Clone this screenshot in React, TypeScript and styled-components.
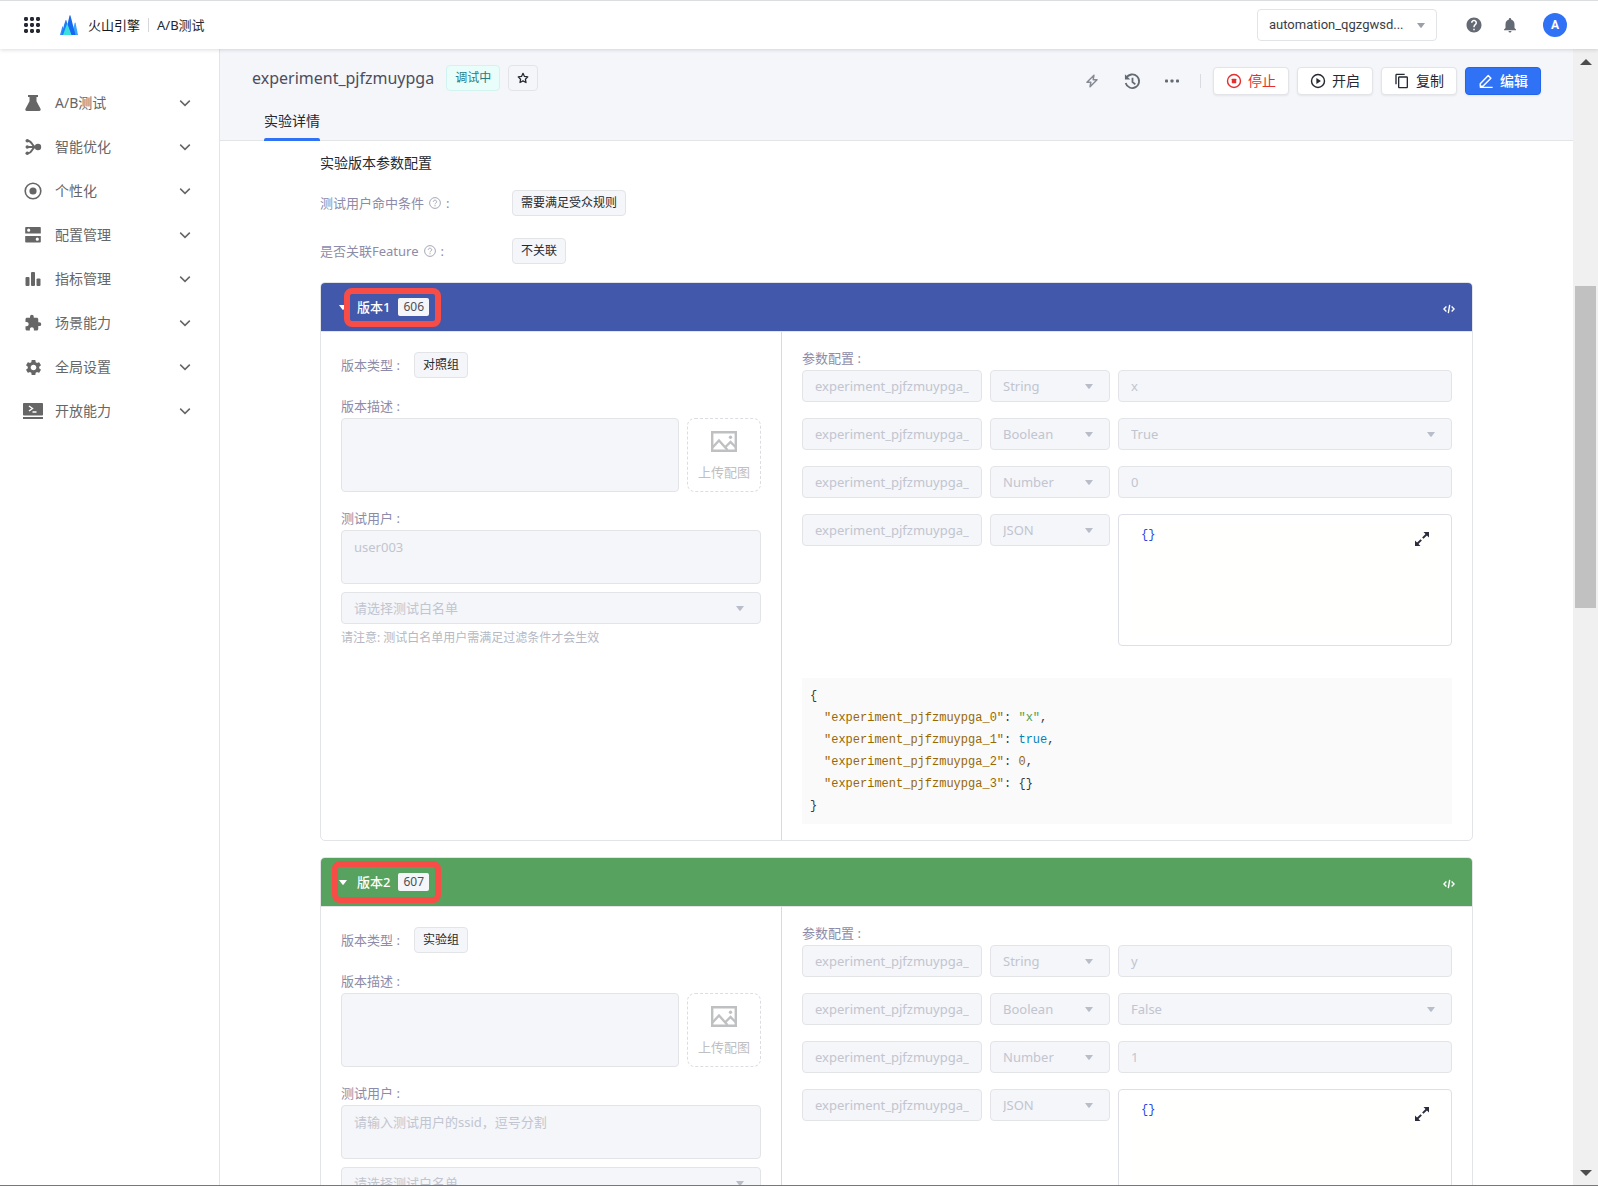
import React, { useId } from 'react';
import styled, { createGlobalStyle } from 'styled-components';
import { MdContentCopy, MdExtension, MdHelp, MdNotifications, MdSettings } from 'react-icons/md';

const color = {
  text: '#252931',
  muted: '#8d8ba9',
  disabled: '#c1c5d0',
  line: '#e3e4e8',
  field: '#f5f6f9',
  blue: '#2f72f5',
  red: '#e52e2e',
  mark: '#f84c47',
};

const sans = '"Noto Sans", "Noto Sans CJK SC", sans-serif';
const mono = '"Liberation Mono", "Noto Sans CJK SC", monospace';

const GlobalStyle = createGlobalStyle`
  * { box-sizing: border-box; }
  body { margin: 0; background: #fff; color: ${color.text}; font: 13px/20px ${sans}; }
  button, input, select, textarea { font: inherit; color: inherit; margin: 0; }
  svg { display: block; flex: none; }
`;

const Shell = styled.div`
  display: flex;
  flex-direction: column;
  height: 100vh;
  border-top: 1px solid #dcdddf;
  border-bottom: 1px solid #77787a;
  overflow: hidden;
`;

/* ---------- top bar ---------- */

const TopBar = styled.header`
  display: flex;
  align-items: center;
  flex: none;
  height: 48px;
  padding: 0 31px 0 24px;
  background: #fff;
  box-shadow: 0 1px 4px rgba(30, 35, 60, 0.16);
  z-index: 2;
`;

const IconButton = styled.button`
  display: flex;
  align-items: center;
  justify-content: center;
  padding: 0;
  border: 0;
  background: none;
  color: #646a73;
`;

const Brand = styled.a`
  display: flex;
  align-items: center;
  gap: 10px;
  margin-left: 20px;
  color: #16181d;
  text-decoration: none;
`;

const Product = styled.span`
  margin-left: 8px;
  padding-left: 8px;
  border-left: 1px solid #d5d7dc;
  line-height: 14px;
`;

const TopRight = styled.div`
  display: flex;
  align-items: center;
  margin-left: auto;
`;

const HelpGroup = styled.div`
  display: flex;
  gap: 18px;
  margin: 0 24px 0 28px;
`;

const Avatar = styled.button`
  width: 24px;
  height: 24px;
  padding: 0;
  border: 0;
  border-radius: 50%;
  background: ${color.blue};
  color: #fff;
  font: 700 12px/24px Roboto, "Noto Sans CJK SC", sans-serif;
`;

/* ---------- form controls ---------- */

const SelectBox = styled.div<{ $tone?: 'light' }>`
  display: grid;
  align-items: center;
  min-width: 0;
  > * { grid-area: 1 / 1; }
  > svg {
    justify-self: end;
    margin-right: ${(p) => (p.$tone ? 12 : 17)}px;
    color: ${(p) => (p.$tone ? '#9a9fa8' : '#b8bdc9')};
    pointer-events: none;
  }
`;

const SelectControl = styled.select<{ $tone?: 'light' }>`
  appearance: none;
  width: 100%;
  height: 32px;
  padding: 0 30px 0 ${(p) => (p.$tone ? 11 : 12)}px;
  border: 1px solid ${color.line};
  border-radius: 4px;
  background: ${(p) => (p.$tone ? '#fff' : color.field)};
  color: ${(p) => (p.$tone ? '#3a3d44' : color.disabled)};
  font-family: ${(p) => (p.$tone ? 'Roboto, "Noto Sans CJK SC", sans-serif' : 'inherit')};
  opacity: 1;
`;

const ProjectPicker = styled.div`
  width: 180px;
`;

const TextInput = styled.input`
  width: 100%;
  min-width: 0;
  height: 32px;
  padding: 0 12px;
  border: 1px solid ${color.line};
  border-radius: 4px;
  background: ${color.field};
  color: ${color.disabled};
`;

const TextArea = styled.textarea<{ $height: number }>`
  display: block;
  flex: 1;
  width: 100%;
  min-width: 0;
  height: ${(p) => p.$height}px;
  padding: 6px 12px;
  border: 1px solid ${color.line};
  border-radius: 4px;
  background: ${color.field};
  color: ${color.disabled};
  resize: none;
  &::placeholder { color: ${color.disabled}; opacity: 1; }
`;

/* ---------- side menu ---------- */

const Columns = styled.div`
  display: flex;
  flex: 1;
  min-height: 0;
`;

const SideNav = styled.nav`
  flex: none;
  width: 220px;
  padding-top: 32px;
  border-right: 1px solid ${color.line};
`;

const NavItem = styled.button`
  display: flex;
  align-items: center;
  width: 100%;
  height: 44px;
  padding: 0 28px 0 23px;
  border: 0;
  background: none;
  color: #666;
  font-size: 14px;
  text-align: left;
`;

const NavIcon = styled.span`
  display: flex;
  justify-content: center;
  width: 20px;
`;

const NavLabel = styled.span`
  flex: 1;
  margin-left: 12px;
`;

/* ---------- page header ---------- */

const Main = styled.main`
  display: flex;
  flex-direction: column;
  flex: 1;
  min-width: 0;
`;

const PageHead = styled.div`
  flex: none;
  padding: 16px 32px 0;
  background: ${color.field};
  border-bottom: 1px solid ${color.line};
`;

const HeadRow = styled.div`
  display: flex;
  align-items: flex-start;
  height: 36px;
`;

const PageTitle = styled.h1`
  margin: 0 12px 0 0;
  color: #4c4d5e;
  font-size: 16px;
  font-weight: 400;
  line-height: 26px;
`;

const Tag = styled.span<{ $active?: boolean }>`
  padding: 0 8px;
  border: 1px solid ${(p) => (p.$active ? '#d3f3f1' : color.line)};
  border-radius: 4px;
  background: ${(p) => (p.$active ? '#e9fdfb' : color.field)};
  color: ${(p) => (p.$active ? '#267b85' : color.text)};
  font-size: 12px;
  line-height: 24px;
`;

const StarButton = styled(IconButton)`
  width: 30px;
  height: 26px;
  margin-left: 8px;
  border: 1px solid ${color.line};
  border-radius: 4px;
  color: ${color.text};
`;

const Actions = styled.div`
  display: flex;
  align-items: center;
  gap: 8px;
  margin-left: auto;
  padding-top: 2px;
`;

const ToolGroup = styled.div`
  display: flex;
  gap: 16px;
  margin-right: 8px;
  > button { width: 24px; height: 24px; }
`;

const Divider = styled.span`
  width: 1px;
  height: 14px;
  margin-right: 4px;
  background: #d9dbe0;
`;

const ActionButton = styled.button<{ $kind?: 'danger' | 'primary' }>`
  display: flex;
  align-items: center;
  gap: 6px;
  height: 28px;
  padding: 0 12px;
  border: 1px solid ${(p) => (p.$kind === 'primary' ? '#2466ea' : color.line)};
  border-radius: 4px;
  background: ${(p) => (p.$kind === 'primary' ? color.blue : '#fff')};
  color: ${(p) => (p.$kind === 'primary' ? '#fff' : p.$kind === 'danger' ? color.red : color.text)};
  font-size: 14px;
  font-weight: ${(p) => (p.$kind === 'primary' ? 500 : 400)};
  box-shadow: 0 1px 2px rgba(30, 35, 60, 0.08);
`;

const Tabs = styled.div`
  display: flex;
  padding-left: 12px;
`;

const Tab = styled.button`
  margin-bottom: -1px;
  padding: 3px 0 0;
  border: 0;
  background: none;
  font-size: 14px;
  line-height: 34px;
  &::after {
    content: '';
    display: block;
    height: 3px;
    border-radius: 2px 2px 0 0;
    background: ${color.blue};
  }
`;

/* ---------- page body ---------- */

const Content = styled.div`
  flex: 1;
  min-height: 0;
  padding: 10px 100px 0;
  overflow: hidden;
`;

const SectionTitle = styled.h2`
  margin: 0 0 4px;
  font-size: 14px;
  font-weight: 400;
  line-height: 24px;
`;

const InfoRow = styled.div`
  display: flex;
  align-items: center;
  height: 48px;
`;

const InfoLabel = styled.span`
  display: flex;
  align-items: center;
  gap: 5px;
  width: 192px;
  color: ${color.muted};
`;

const CardList = styled.div`
  display: grid;
  gap: 16px;
  padding: 7px 0 16px;
`;

const Card = styled.section`
  position: relative;
  border: 1px solid ${color.line};
  border-radius: 5px;
  overflow: hidden;
`;

const CardHead = styled.div<{ $fill: string }>`
  display: flex;
  align-items: center;
  height: 49px;
  padding: 0 17px 0 18px;
  border-bottom: 1px solid ${color.line};
  background: ${(p) => p.$fill};
  background-clip: padding-box;
  color: #fff;
`;

const CardToggle = styled.button`
  display: flex;
  align-items: center;
  gap: 10px;
  padding: 0;
  border: 0;
  background: none;
  font-weight: 500;
`;

const VersionId = styled.span`
  margin: 0 auto 0 8px;
  padding: 0 5px;
  border-radius: 2px;
  background: ${color.field};
  color: #4c4f58;
  font-size: 12px;
  line-height: 18px;
`;

const CodeButton = styled(IconButton)`
  padding-top: 3px;
  color: #fff;
`;

/* Highlight frame drawn over the card header */
const Highlight = styled.div<{ $wide?: boolean }>`
  position: absolute;
  top: ${(p) => (p.$wide ? 3 : 5)}px;
  left: ${(p) => (p.$wide ? 11 : 23)}px;
  width: ${(p) => (p.$wide ? 109 : 97)}px;
  height: ${(p) => (p.$wide ? 42 : 39)}px;
  border: 6px solid ${color.mark};
  border-radius: 8px;
  pointer-events: none;
`;

const CardBody = styled.div`
  display: flex;
`;

const LeftPane = styled.div`
  flex: none;
  width: 461px;
  padding: 20px;
  border-right: 1px solid #d9dae0;
`;

const RightPane = styled.div`
  flex: 1;
  min-width: 0;
  padding: 14px 20px 16px;
`;

const TypeRow = styled.div`
  display: flex;
  align-items: center;
  gap: 14px;
  height: 26px;
  margin-bottom: 16px;
  color: ${color.muted};
`;

const FieldLabel = styled.label`
  display: block;
  color: ${color.muted};
  line-height: 24px;
`;

const FieldGroup = styled.div`
  display: flex;
  gap: 8px;
  margin-bottom: 14px;
`;

const FieldStack = styled.div`
  display: grid;
  gap: 8px;
`;

const Note = styled.p`
  margin: 0;
  padding-top: 2px;
  color: #b4b8c4;
  font-size: 12px;
  line-height: 24px;
`;

const UploadButton = styled.button`
  display: flex;
  flex-direction: column;
  align-items: center;
  justify-content: space-between;
  width: 74px;
  height: 74px;
  padding: 12px 0 9px;
  border: 1px dashed #dcdde2;
  border-radius: 8px;
  background: #fff;
  color: #bfc0c2;
`;

const ParamRow = styled.div`
  display: grid;
  grid-template-columns: 180px 120px minmax(0, 1fr);
  align-items: start;
  gap: 8px;
  margin-bottom: 16px;
`;

const JsonEditor = styled.div`
  position: relative;
  height: 132px;
  padding: 10px 12px;
  border: 1px solid #dfdfe8;
  border-radius: 4px;
`;

const JsonText = styled.textarea`
  display: block;
  width: 100%;
  height: 110px;
  padding: 0 10px;
  border: 0;
  outline: 0;
  background: #fffffe;
  color: #2a48e8;
  font: 12px/20px ${mono};
  resize: none;
`;

const ExpandButton = styled(IconButton)`
  position: absolute;
  top: 17px;
  right: 22px;
  color: #2b2c3c;
`;

const CodeBlock = styled.pre`
  margin: 32px 0 0;
  padding: 7px 8px;
  background: #fafafa;
  color: #383a42;
  font: 12px/22px ${mono};
  overflow: hidden;
`;

const CodeLine = styled.code<{ $nested?: boolean }>`
  display: flex;
  padding-left: ${(p) => (p.$nested ? 14 : 0)}px;
  font: inherit;
`;

const Token = styled.span<{ $type?: 'key' | 'string' | 'boolean' | 'number' }>`
  color: ${(p) => (p.$type ? { key: '#986801', string: '#50a14f', boolean: '#0184bb', number: '#986801' }[p.$type] : 'inherit')};
  line-height: 22px;
`;

/* ---------- scroll rail ---------- */

const Rail = styled.div`
  display: flex;
  flex-direction: column;
  align-items: center;
  flex: none;
  width: 25px;
  padding: 10px 0 9px;
  background: #f0f0f0;
  color: #4d4d4d;
`;

const RailTrack = styled.div`
  flex: 1;
  width: 21px;
  padding-top: 221px;
`;

const RailThumb = styled.div`
  height: 322px;
  background: #c1c1c1;
`;

/* ---------- icons ---------- */

const Svg = ({ size = 18, children }: { size?: number; children: React.ReactNode }) => (
  <svg width={size} height={size} viewBox="0 0 18 18" fill="currentColor" aria-hidden="true">
    {children}
  </svg>
);

const Caret = () => (
  <svg width="8" height="5" viewBox="0 0 8 5" fill="currentColor" aria-hidden="true">
    <path d="M0 0h8L4.6 4.6a.8.8 0 0 1-1.2 0z" />
  </svg>
);

const Chevron = () => (
  <svg width="12" height="8" viewBox="0 0 12 8" fill="none" stroke="currentColor" strokeWidth="1.5" aria-hidden="true">
    <path d="M1.2 1.6L6 6.400l4.800-4.800" />
  </svg>
);

const AppsIcon = () => (
  <svg width="16" height="16" viewBox="0 0 16 16" fill="#252931" aria-hidden="true">
    {[0, 6, 12].map((y) => [0, 6, 12].map((x) => <rect key={`${x}-${y}`} x={x} y={y} width="4" height="4" rx="1.4" />))}
  </svg>
);

const LogoIcon = () => (
  <svg width="18" height="20" viewBox="0 0 18 20" aria-hidden="true">
    <path d="M0 20L2.200 12c.2-.6.7-.6.9 0L6 20z" fill="#2c8dff" />
    <path d="M12 20l2.600-12c.2-.7.800-.7 1 0L18 20z" fill="#38a5ff" />
    <path d="M5 20L9.500.8c.2-.7.8-.7 1 0L15.500 20z" fill="#1668f0" />
    <path d="M4 10L5.500 5.500c.2-.6.7-.6.900 0L8 11 5 20H1.800z" fill="#1e7dfb" />
    <path d="M3 20l3.800-10.500c.2-.6.7-.6.9 0L11.500 20z" fill="#3be0dc" />
  </svg>
);

const FlaskIcon = () => <Svg><path d="M4 1h10v2h-1.500v4.200l4 7.600c.6 1.200-.1 2.200-1.300 2.200H2.800C1.600 17 .9 16 1.500 14.800l4-7.600V3H4z" /></Svg>;
const BranchIcon = () => (
  <Svg>
    <path d="M3.500 2.800C9 2.800 7.500 9 12 9M3.500 15.200C9 15.200 7.500 9 12 9M3.500 9H13" fill="none" stroke="currentColor" strokeWidth="2" />
    <circle cx="3.300" cy="2.800" r="1.800" /><circle cx="3.300" cy="9" r="1.800" /><circle cx="3.300" cy="15.200" r="1.800" /><circle cx="14" cy="9" r="3.200" />
  </Svg>
);
const TargetIcon = () => <Svg><circle cx="9" cy="9" r="7.800" fill="none" stroke="currentColor" strokeWidth="1.600" /><circle cx="9" cy="9" r="3.600" /></Svg>;
const StackIcon = () => (
  <Svg><path fillRule="evenodd" d="M2 1h14a.8.8 0 0 1 .8.8V7.500H1.200V1.800A.8.8 0 0 1 2 1zm2.700 1.600a1.600 1.600 0 1 0 0 3.200 1.600 1.600 0 0 0 0-3.200zM1.200 10h15.600v5.700a.8.8 0 0 1-.8.8H2a.8.8 0 0 1-.8-.8zm12.100 1.600a1.600 1.600 0 1 0 0 3.200 1.600 1.600 0 0 0 0-3.200z" /></Svg>
);
const BarsIcon = () => <Svg><rect x="1.500" y="7" width="4" height="9" rx="1" /><rect x="7" y="2" width="4" height="14" rx="1" /><rect x="12.500" y="8.500" width="4" height="7.500" rx="1" /></Svg>;
const TerminalIcon = () => (
  <svg width="20" height="18" viewBox="0 0 20 18" fill="currentColor" aria-hidden="true">
    <rect y="1" width="20" height="12.500" rx=".8" /><rect y="15" width="20" height="2" />
    <path d="M6 4l3.500 2.500L6 9M9.500 10h4" fill="none" stroke="#fff" strokeWidth="1.400" />
  </svg>
);

const QuestionIcon = () => (
  <svg width="12" height="12" viewBox="0 0 12 12" fill="none" stroke="#a5a8b8" aria-hidden="true">
    <circle cx="6" cy="6" r="5.400" />
    <path d="M4.300 4.900c0-2.300 3.400-2.300 3.400 0C7.700 6 6 6 6 7.300M6 8.200v1.100" />
  </svg>
);
const StarIcon = () => <Svg size={12}><path d="M9 2l2.200 4.600 5 .7-3.600 3.500.9 5L9 13.400l-4.500 2.400.9-5L1.800 7.300l5-.7z" fill="none" stroke="currentColor" strokeWidth="1.900" strokeLinejoin="round" /></Svg>;
const BoltIcon = () => <Svg size={14}><path d="M11.500 1.500L2.500 10.500h5l-1 6 9-9h-5z" fill="none" stroke="#858a94" strokeWidth="1.900" strokeLinejoin="round" /></Svg>;
const HistoryIcon = () => (
  <Svg size={17}><path d="M2.500 5.200a7.200 7.200 0 1 1-.7 5.300M9 5v4.500l3 2.500" fill="none" stroke="currentColor" strokeWidth="1.900" /><path d="M1 1.200v5.600h5.600z" /></Svg>
);
const DotsIcon = () => <svg width="14" height="4" viewBox="0 0 14 4" fill="currentColor" aria-hidden="true"><rect y=".5" width="3" height="3" rx=".8" /><rect x="5.500" y=".5" width="3" height="3" rx=".8" /><rect x="11" y=".5" width="3" height="3" rx=".8" /></svg>;
const StopIcon = () => <Svg size={16}><circle cx="9" cy="9" r="7.300" fill="none" stroke="currentColor" strokeWidth="1.600" /><rect x="6.500" y="6.500" width="5" height="5" rx=".5" /></Svg>;
const PlayIcon = () => <Svg size={16}><circle cx="9" cy="9" r="7.300" fill="none" stroke="currentColor" strokeWidth="1.600" /><path d="M7.200 5.700v6.600L12.300 9z" /></Svg>;
const EditIcon = () => <Svg size={16}><path d="M2.500 12.200l9-9.400 3 3-9 9.200H2.500zM2 16.200h14.500" fill="none" stroke="currentColor" strokeWidth="1.600" strokeLinejoin="round" /></Svg>;
const CodeIcon = () => (
  <svg width="12" height="10" viewBox="0 0 12 10" fill="none" stroke="currentColor" strokeWidth="1.400" aria-hidden="true">
    <path d="M3.400 2.500L.9 5l2.500 2.500M8.600 2.500L11.100 5 8.600 7.500M6.700.8L5.300 9.200" />
  </svg>
);
const PictureIcon = () => (
  <svg width="26" height="21" viewBox="0 0 26 21" fill="none" stroke="currentColor" aria-hidden="true">
    <path d="M1.200 1.200h23.600v18.600H1.200z" strokeWidth="2.400" />
    <path d="M1.500 16.500l6.500-7 8.500 9.500M14.500 16l5-5 5.500 5.500" strokeWidth="2.400" />
    <circle cx="19.500" cy="6.200" r="1.700" fill="currentColor" stroke="none" />
  </svg>
);
const ExpandIcon = () => (
  <svg width="14" height="14" viewBox="0 0 14 14" fill="currentColor" aria-hidden="true">
    <path d="M8.500 0H14v5.500zM0 8.500V14h5.500z" /><path d="M12 2L7.800 6.200M6.200 7.800L2 12" stroke="currentColor" strokeWidth="1.900" />
  </svg>
);
const RailArrow = ({ up }: { up?: boolean }) => (
  <svg width="12" height="6" viewBox="0 0 12 6" fill="currentColor" aria-hidden="true"><path d={up ? 'M6 0l6 6H0z' : 'M0 0h12L6 6z'} /></svg>
);

/* ---------- data ---------- */

const menu = [
  { label: 'A/B测试', icon: <FlaskIcon /> },
  { label: '智能优化', icon: <BranchIcon /> },
  { label: '个性化', icon: <TargetIcon /> },
  { label: '配置管理', icon: <StackIcon /> },
  { label: '指标管理', icon: <BarsIcon /> },
  { label: '场景能力', icon: <MdExtension size={18} /> },
  { label: '全局设置', icon: <MdSettings size={19} /> },
  { label: '开放能力', icon: <TerminalIcon /> },
];

interface Version {
  name: string;
  id: string;
  fill: string;
  group: string;
  users: string;
  text: string;
  flag: string;
  count: string;
  wideMark?: boolean;
}

const versions: Version[] = [
  { name: '版本1', id: '606', fill: '#4259ab', group: '对照组', users: 'user003', text: 'x', flag: 'True', count: '0' },
  { name: '版本2', id: '607', fill: '#58a25f', group: '实验组', users: '', text: 'y', flag: 'False', count: '1', wideMark: true },
];

const PARAM = 'experiment_pjfzmuypga_';

/* ---------- components ---------- */

const DisabledSelect = ({ id, label, value }: { id?: string; label: string; value: string }) => (
  <SelectBox>
    <SelectControl id={id} aria-label={label} disabled defaultValue={value}>
      <option>{value}</option>
    </SelectControl>
    <Caret />
  </SelectBox>
);

const Param = ({ index, type, children }: { index: number; type: string; children: React.ReactNode }) => (
  <ParamRow>
    <TextInput aria-label={`参数名 ${index}`} disabled defaultValue={PARAM} />
    <DisabledSelect label={`参数类型 ${index}`} value={type} />
    {children}
  </ParamRow>
);

const JsonPreview = ({ v }: { v: Version }) => {
  const entries = [
    { type: 'string' as const, value: `"${v.text}"` },
    { type: 'boolean' as const, value: v.flag.toLowerCase() },
    { type: 'number' as const, value: v.count },
    { type: undefined, value: '{}' },
  ];
  return (
    <CodeBlock>
      <CodeLine>{'{'}</CodeLine>
      {entries.map((entry, i) => (
        <CodeLine key={i} $nested>
          <Token $type="key">{`"${PARAM}${i}"`}</Token>
          <Token>{': '}</Token>
          <Token $type={entry.type}>{entry.value}</Token>
          {i < entries.length - 1 && <Token>,</Token>}
        </CodeLine>
      ))}
      <CodeLine>{'}'}</CodeLine>
    </CodeBlock>
  );
};

const VersionCard = ({ v }: { v: Version }) => {
  const uid = useId();
  return (
    <Card>
      <CardHead $fill={v.fill}>
        <CardToggle type="button"><Caret />{v.name}</CardToggle>
        <VersionId>{v.id}</VersionId>
        <CodeButton type="button" aria-label="代码"><CodeIcon /></CodeButton>
      </CardHead>
      <Highlight $wide={v.wideMark} />
      <CardBody>
        <LeftPane>
          <TypeRow><span>版本类型 :</span><Tag>{v.group}</Tag></TypeRow>
          <FieldLabel htmlFor={`${uid}-desc`}>版本描述 :</FieldLabel>
          <FieldGroup>
            <TextArea id={`${uid}-desc`} $height={74} disabled />
            <UploadButton type="button"><PictureIcon />上传配图</UploadButton>
          </FieldGroup>
          <FieldLabel htmlFor={`${uid}-users`}>测试用户 :</FieldLabel>
          <FieldStack>
            <TextArea id={`${uid}-users`} $height={54} disabled defaultValue={v.users} placeholder="请输入测试用户的ssid，逗号分割" />
            <DisabledSelect label="测试白名单" value="请选择测试白名单" />
          </FieldStack>
          <Note>请注意: 测试白名单用户需满足过滤条件才会生效</Note>
        </LeftPane>
        <RightPane>
          <FieldLabel htmlFor={`${uid}-param`}>参数配置 :</FieldLabel>
          <Param index={0} type="String"><TextInput id={`${uid}-param`} disabled defaultValue={v.text} /></Param>
          <Param index={1} type="Boolean"><DisabledSelect label="布尔值" value={v.flag} /></Param>
          <Param index={2} type="Number"><TextInput aria-label="数值" disabled defaultValue={v.count} /></Param>
          <Param index={3} type="JSON">
            <JsonEditor>
              <JsonText aria-label="JSON" defaultValue="{}" spellCheck={false} />
              <ExpandButton type="button" aria-label="展开"><ExpandIcon /></ExpandButton>
            </JsonEditor>
          </Param>
          <JsonPreview v={v} />
        </RightPane>
      </CardBody>
    </Card>
  );
};

export default function App() {
  return (
    <Shell>
      <GlobalStyle />
      <TopBar>
        <IconButton type="button" aria-label="应用"><AppsIcon /></IconButton>
        <Brand href="#"><LogoIcon />火山引擎</Brand>
        <Product>A/B测试</Product>
        <TopRight>
          <ProjectPicker>
            <SelectBox $tone="light">
              <SelectControl $tone="light" aria-label="项目" defaultValue="automation_qgzgwsd...">
                <option>automation_qgzgwsd...</option>
              </SelectControl>
              <Caret />
            </SelectBox>
          </ProjectPicker>
          <HelpGroup>
            <IconButton type="button" aria-label="帮助"><MdHelp size={18} /></IconButton>
            <IconButton type="button" aria-label="通知"><MdNotifications size={18} /></IconButton>
          </HelpGroup>
          <Avatar type="button">A</Avatar>
        </TopRight>
      </TopBar>
      <Columns>
        <SideNav>
          {menu.map((item) => (
            <NavItem type="button" key={item.label}>
              <NavIcon>{item.icon}</NavIcon>
              <NavLabel>{item.label}</NavLabel>
              <Chevron />
            </NavItem>
          ))}
        </SideNav>
        <Main>
          <PageHead>
            <HeadRow>
              <PageTitle>experiment_pjfzmuypga</PageTitle>
              <Tag $active>调试中</Tag>
              <StarButton type="button" aria-label="收藏"><StarIcon /></StarButton>
              <Actions>
                <ToolGroup>
                  <IconButton type="button" aria-label="快捷操作"><BoltIcon /></IconButton>
                  <IconButton type="button" aria-label="历史"><HistoryIcon /></IconButton>
                  <IconButton type="button" aria-label="更多"><DotsIcon /></IconButton>
                </ToolGroup>
                <Divider />
                <ActionButton type="button" $kind="danger"><StopIcon />停止</ActionButton>
                <ActionButton type="button"><PlayIcon />开启</ActionButton>
                <ActionButton type="button"><MdContentCopy size={16} />复制</ActionButton>
                <ActionButton type="button" $kind="primary"><EditIcon />编辑</ActionButton>
              </Actions>
            </HeadRow>
            <Tabs><Tab type="button">实验详情</Tab></Tabs>
          </PageHead>
          <Content>
            <SectionTitle>实验版本参数配置</SectionTitle>
            <InfoRow>
              <InfoLabel>测试用户命中条件 <QuestionIcon />:</InfoLabel>
              <Tag>需要满足受众规则</Tag>
            </InfoRow>
            <InfoRow>
              <InfoLabel>是否关联Feature <QuestionIcon />:</InfoLabel>
              <Tag>不关联</Tag>
            </InfoRow>
            <CardList>
              {versions.map((v) => <VersionCard key={v.id} v={v} />)}
            </CardList>
          </Content>
        </Main>
        <Rail aria-hidden="true">
          <RailArrow up />
          <RailTrack><RailThumb /></RailTrack>
          <RailArrow />
        </Rail>
      </Columns>
    </Shell>
  );
}
